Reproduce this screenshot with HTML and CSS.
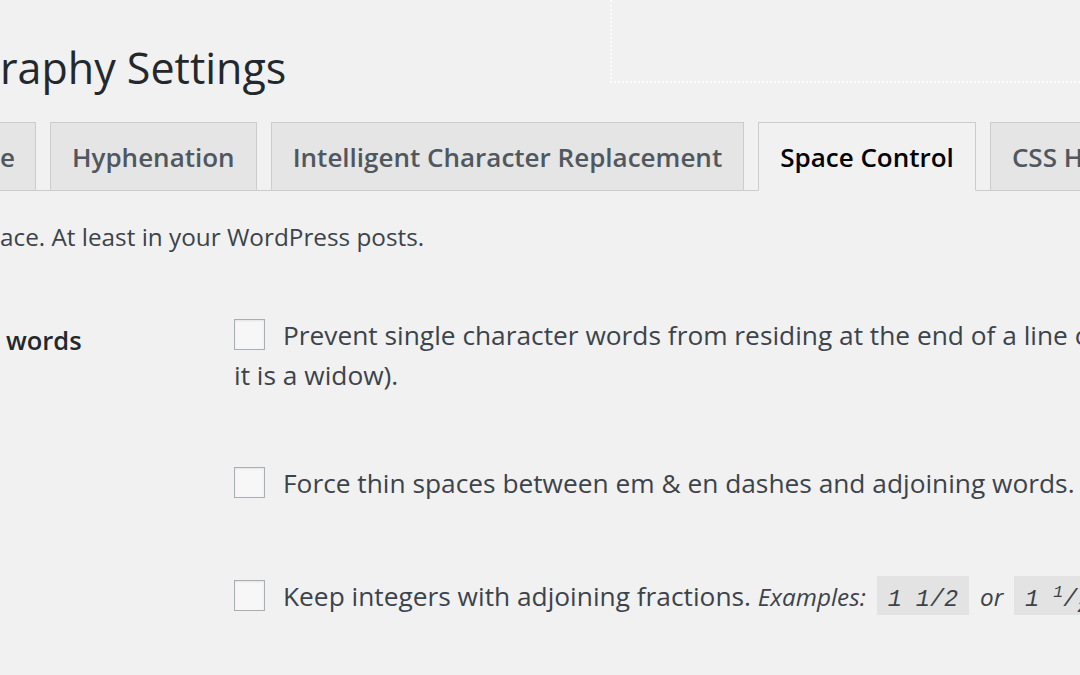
FILE: index.html
```html
<!DOCTYPE html>
<html lang="en">
<head>
<meta charset="utf-8">
<title>Typography Settings</title>
<link rel="stylesheet" href="styles.css">
</head>
<body>
<header class="header">
  <h1 class="title">raphy Settings</h1>
  <div class="screen-meta"></div>
</header>
<nav class="tabs">
  <a class="tab tab-first">e</a>
  <a class="tab">Hyphenation</a>
  <a class="tab">Intelligent Character Replacement</a>
  <a class="tab tab-active">Space Control</a>
  <a class="tab">CSS Hooks</a>
</nav>
<p class="desc">ace. At least in your WordPress posts.</p>
<div class="form">
  <div class="row row-1">
    <div class="th">words</div>
    <div class="td"><label><input type="checkbox" class="cb">Prevent single character words from residing at the end of a line of text (unless<br>it is a widow).</label></div>
  </div>
  <div class="row row-2">
    <div class="th"></div>
    <div class="td"><label><input type="checkbox" class="cb">Force thin spaces between em &amp; en dashes and adjoining words.</label></div>
  </div>
  <div class="row row-3">
    <div class="th"></div>
    <div class="td"><label><input type="checkbox" class="cb">Keep integers with adjoining fractions. <em class="ex">Examples:</em> <code class="code">1 1/2</code> <em class="ex">or</em> <code class="code">1 <sup>1</sup>/<sub>2</sub></code></label></div>
  </div>
</div>
</body>
</html>
```

FILE: styles.css
```css
* { box-sizing: border-box; }
html, body { margin: 0; padding: 0; }
body {
  background: #f1f1f1;
  font-family: "Open Sans", "Noto Sans", sans-serif;
  color: #444;
  width: 1080px;
  height: 675px;
  overflow: hidden;
}
.header {
  display: flex;
  height: 122px;
}
.title {
  margin: 38px 0 0 0;
  font-size: 43px;
  line-height: 60px;
  font-weight: 400;
  color: #23282d;
  white-space: nowrap;
}
.screen-meta {
  margin-left: auto;
  width: 470px;
  height: 83px;
  border-left: 2px dotted #fbfbfb;
  border-bottom: 2px dotted #fbfbfb;
}
.tabs {
  display: flex;
  align-items: flex-start;
  height: 69px;
  border-bottom: 1px solid #ccc;
  white-space: nowrap;
}
.tab {
  flex: none;
  height: 68px;
  margin-left: 14px;
  padding: 14px 21px 0;
  border: 1px solid #ccc;
  border-bottom: none;
  background: #e5e5e5;
  color: #50575e;
  font-size: 26px;
  font-weight: 600;
  line-height: 40px;
  text-decoration: none;
}
.tab-first {
  margin-left: 0;
  border-left: none;
  padding-left: 0;
  padding-right: 20px;
}
.tab-active {
  height: 69px;
  margin-bottom: -1px;
  border-bottom: 1px solid #f1f1f1;
  background: #f1f1f1;
  color: #000;
}
.desc {
  margin: 28px 0 0;
  font-size: 24.3px;
  line-height: 36px;
  color: #3c434a;
  white-space: nowrap;
}
.row {
  display: grid;
  grid-template-columns: 234px 1fr;
}
.row-1 { padding-top: 60px; }
.row-2 { padding-top: 68px; }
.row-3 { padding-top: 72.7px; }
.th {
  padding: 5px 0 0 6px;
  font-size: 25.5px;
  font-weight: 600;
  line-height: 40px;
  color: #23282d;
}
.td {
  font-size: 26.3px;
  line-height: 40px;
  white-space: nowrap;
  color: #3c434a;
}
.ex {
  font-size: 24.3px;
}
.cb {
  -webkit-appearance: none;
  appearance: none;
  width: 31px;
  height: 31px;
  margin: 0 18px 0 0;
  border: 1px solid #a9aeb3;
  border-radius: 0;
  background: #f7f7f7;
  box-shadow: inset 0 1px 2px rgba(0, 0, 0, 0.08);
  vertical-align: -5px;
}
.code {
  font-family: "Liberation Mono", monospace;
  font-style: italic;
  font-size: 23.5px;
  background: #e3e3e3;
  padding: 10px 11px 2px;
  margin: 0 4px;
  color: #3c434a;
}
.code sup, .code sub {
  font-size: 0.7em;
  line-height: 0;
}
```
